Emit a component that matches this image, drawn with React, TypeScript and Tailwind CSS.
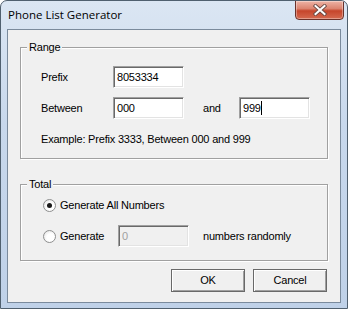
import React from "react";

const ui = { fontFamily: '"Liberation Sans", Arial, sans-serif' };

const Sunken = ({ value, disabled, caret, w }: { value: string; disabled?: boolean; caret?: boolean; w: string }) => (
  <div
    className={`${w} h-[22px] flex items-center pl-[3px] text-[11px] border border-t-[#a0a0a0] border-l-[#a0a0a0] border-b-white border-r-white shadow-[inset_1px_1px_0_#696969,inset_-1px_-1px_0_#e3e3e3] ${
      disabled ? "bg-[#f0f0f0] text-[#a0a0a0]" : "bg-white text-black"
    }`}
  >
    <span>{value}</span>
    {caret && <span className="w-px h-[14px] bg-black" />}
  </div>
);

const Group = ({ title, className, children }: { title: string; className: string; children: React.ReactNode }) => (
  <div
    className={`relative border border-[#a0a0a0] shadow-[inset_1px_1px_0_#fff,1px_1px_0_#fff] ${className}`}
  >
    <span className="absolute -top-[8px] left-[6px] px-[2px] bg-[#f0f0f0] text-[11px] leading-[14px] text-black">
      {title}
    </span>
    {children}
  </div>
);

const Radio = ({ checked }: { checked?: boolean }) => (
  <div className="w-[13px] h-[13px] rounded-full border border-[#8e8f8f] bg-[radial-gradient(circle_at_60%_60%,#ffffff_40%,#dcdcdc_100%)] flex items-center justify-center">
    {checked && <div className="w-[5px] h-[5px] rounded-full bg-[#1a1a1a]" />}
  </div>
);

const Button = ({ label }: { label: string }) => (
  <div className="w-[74px] h-[23px] flex items-center justify-center text-[11px] text-black bg-[#f0f0f0] border border-[#696969] shadow-[inset_1px_1px_0_#fff,inset_-1px_-1px_0_#a0a0a0]">
    {label}
  </div>
);

export default function App() {
  return (
    <div
      className="w-[348px] h-[309px] flex flex-col rounded-t-[7px] border border-[#50606f] bg-[linear-gradient(180deg,#dbe6f3_0%,#c8d8ec_40%,#bfd1e8_100%)] overflow-hidden tracking-[-0.2px]"
      style={ui}
    >
      {/* Title bar */}
      <div className="h-[28px] flex items-start justify-between">
        <span
          className="ml-[7px] mt-[6px] text-[11.5px] leading-[16px] text-black tracking-normal"
          style={{ fontFamily: '"Open Sans", "Noto Sans", sans-serif' }}
        >
          Phone List Generator
        </span>
        <div className="mr-[3px] -mt-px w-[49px] h-[20px] rounded-b-[4px] border border-[#6b322a] bg-[linear-gradient(180deg,#eeb4a6_0%,#dc8470_42%,#c6452b_55%,#d56a50_100%)] flex items-center justify-center shadow-[inset_0_0_0_1px_rgba(255,255,255,0.35)]">
          <svg width="14" height="12" viewBox="0 0 14 12">
            <path d="M2.5 2 L11.5 10 M11.5 2 L2.5 10" stroke="#6b4a44" strokeWidth="3.8" strokeLinecap="square" />
            <path d="M2.5 2 L11.5 10 M11.5 2 L2.5 10" stroke="#ffffff" strokeWidth="2" strokeLinecap="square" />
          </svg>
        </div>
      </div>

      {/* Client area */}
      <div className="mx-[6px] mb-[5px] flex-1 border border-[#7a8a9c] bg-[#f0f0f0] flex flex-col pt-[17px] px-[12px] text-[11px] text-black">
        <Group title="Range" className="h-[112px] pt-[18px] pl-[20px] flex flex-col">
          <div className="flex items-center">
            <span className="w-[72px]">Prefix</span>
            <Sunken value="8053334" w="w-[71px]" />
          </div>
          <div className="flex items-center mt-[9px]">
            <span className="w-[72px]">Between</span>
            <Sunken value="000" w="w-[71px]" />
            <span className="ml-[19px] w-[36px]">and</span>
            <Sunken value="999" caret w="w-[71px]" />
          </div>
          <div className="mt-[12px]">Example: Prefix 3333, Between 000 and 999</div>
        </Group>

        <Group title="Total" className="mt-[25px] h-[77px] pt-[9px] pl-[22px] flex flex-col">
          <div className="h-[22px] flex items-center">
            <Radio checked />
            <span className="ml-[4px]">Generate All Numbers</span>
          </div>
          <div className="h-[22px] flex items-center mt-[9px]">
            <Radio />
            <span className="ml-[4px] w-[58px]">Generate</span>
            <Sunken value="0" disabled w="w-[71px]" />
            <span className="ml-[14px]">numbers randomly</span>
          </div>
        </Group>

        <div className="mt-[8px] flex justify-end gap-[8px] pr-[1px]">
          <Button label="OK" />
          <Button label="Cancel" />
        </div>
      </div>
    </div>
  );
}
